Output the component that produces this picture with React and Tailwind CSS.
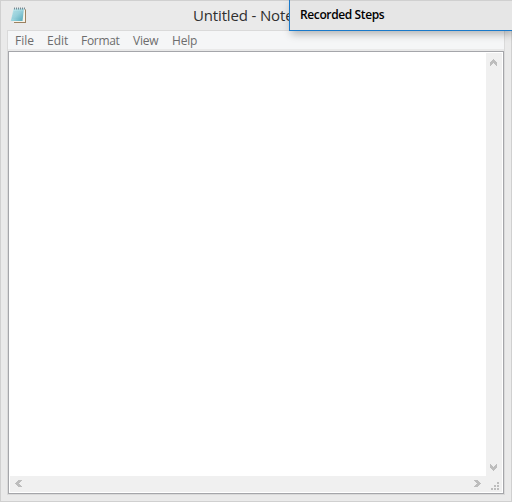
import React from 'react';

const menus = [
  { label: 'File', cls: 'w-8' },
  { label: 'Edit', cls: 'w-[34px]' },
  { label: 'Format', cls: 'w-[52px] tracking-[-0.3px]' },
  { label: 'View', cls: 'w-[39px] tracking-[-0.2px]' },
  { label: 'Help', cls: 'w-10 tracking-[-0.2px]' },
];

const chevrons = {
  up: 'M3 0H4V1H5V2H6V3H7V7H6V6H5V5H4V4H3V5H2V6H1V7H0V3H1V2H2V1H3Z',
  down: 'M3 7H4V6H5V5H6V4H7V0H6V1H5V2H4V3H3V2H2V1H1V0H0V4H1V5H2V6H3Z',
  left: 'M0 3V4H1V5H2V6H3V7H7V6H6V5H5V4H4V3H5V2H6V1H7V0H3V1H2V2H1V3Z',
  right: 'M7 3V4H6V5H5V6H4V7H0V6H1V5H2V4H3V3H2V2H1V1H0V0H4V1H5V2H6V3Z',
};

function Chevron({ dir }) {
  return (
    <svg width="7" height="7" viewBox="0 0 7 7" shapeRendering="crispEdges" className="block">
      <path d={chevrons[dir]} fill="#bdbdbd" />
    </svg>
  );
}

function NotepadIcon() {
  return (
    <svg width="18" height="18" viewBox="0 0 18 18" className="block">
      <defs>
        <linearGradient id="page" x1="0" y1="0" x2="1" y2="1">
          <stop offset="0" stopColor="#c8ebef" />
          <stop offset=".5" stopColor="#9fd6df" />
          <stop offset="1" stopColor="#4da5b7" />
        </linearGradient>
      </defs>
      <path d="M14 2L16 2.5V16H4V14.5H13Z" fill="#9b8160" />
      <path d="M13.5 2H15V15H3.5V14Z" fill="#f8f4e9" />
      <path d="M3.6 1.5H14L12.5 14H.8Z" fill="url(#page)" />
      <path d="M3.5 5H13.2M3 7H13M2.6 9H12.8M2 11H12.5" stroke="#67afbd" strokeWidth=".3" />
      <path d="M4.5 .5V2.5M6.5 .5V2.5M8.5 .5V2.5M10.5 .5V2.5M12.5 .5V2.5M14.5 .5V2.5" stroke="#60717b" strokeWidth=".8" />
    </svg>
  );
}

export default function App() {
  return (
    <div className="relative h-[502px] w-[512px] overflow-hidden font-['Open_Sans','Noto_Sans',sans-serif]">
      <div className="flex h-full flex-col border border-[#d0d0d0] bg-[#eaeaea]">
        <header className="flex h-[29px] shrink-0 pl-[9px] pt-[6px]">
          <NotepadIcon />
          <span className="-mt-[4px] ml-[165px] block h-6 whitespace-nowrap text-[15px] leading-[24px] tracking-[-0.15px] text-[#303030]">Untitled - Note</span>
        </header>
        <main className="ml-[6px] flex h-[465px] w-[498px] shrink-0 flex-col border border-[#dadada]">
          <nav className="flex h-5 shrink-0 border-b-2 border-[#e9e9e9] bg-[#f5f6f7] pl-[7px] text-[12px] leading-[20px] text-[#6d6d6d]">
            {menus.map(({ label, cls }) => (
              <span key={label} className={`${cls} shrink-0 whitespace-nowrap`}>{label}</span>
            ))}
          </nav>
          <section className="flex h-[443px] shrink-0 flex-col border border-[#a5a6aa] bg-white p-px">
            <div className="flex min-h-0 flex-1">
              <div className="flex-1 bg-white" />
              <div className="flex w-4 flex-col items-start justify-between bg-[#f0f0f0] pb-[5px] pl-1 pt-[6px]">
                <Chevron dir="up" />
                <Chevron dir="down" />
              </div>
            </div>
            <div className="flex h-4 shrink-0 bg-[#f0f0f0]">
              <div className="flex flex-1 items-start justify-between px-[5px] pt-1">
                <Chevron dir="left" />
                <Chevron dir="right" />
              </div>
              <div className="w-4 pl-[5px] pt-[6px]">
                <svg width="8" height="8" viewBox="0 0 8 8" shapeRendering="crispEdges" className="block">
                  <path d="M6 0H8V2H6ZM3 3H5V5H3ZM6 3H8V5H6ZM0 6H2V8H0ZM3 6H5V8H3ZM6 6H8V8H6Z" fill="#bdbdbd" />
                </svg>
              </div>
            </div>
          </section>
        </main>
      </div>
      <aside className="absolute left-[289px] top-0 h-[31px] w-[223px] border-b border-l border-[#1979ca] bg-[#e6e6e6] shadow-[2px_3px_8px_rgba(0,0,0,0.28)]">
        <h2 className="border-t border-[#d0d0d0] pl-[10px] pt-[3px] text-[12px] font-semibold leading-[22px] tracking-[-0.38px] text-black">Recorded Steps</h2>
      </aside>
    </div>
  );
}
